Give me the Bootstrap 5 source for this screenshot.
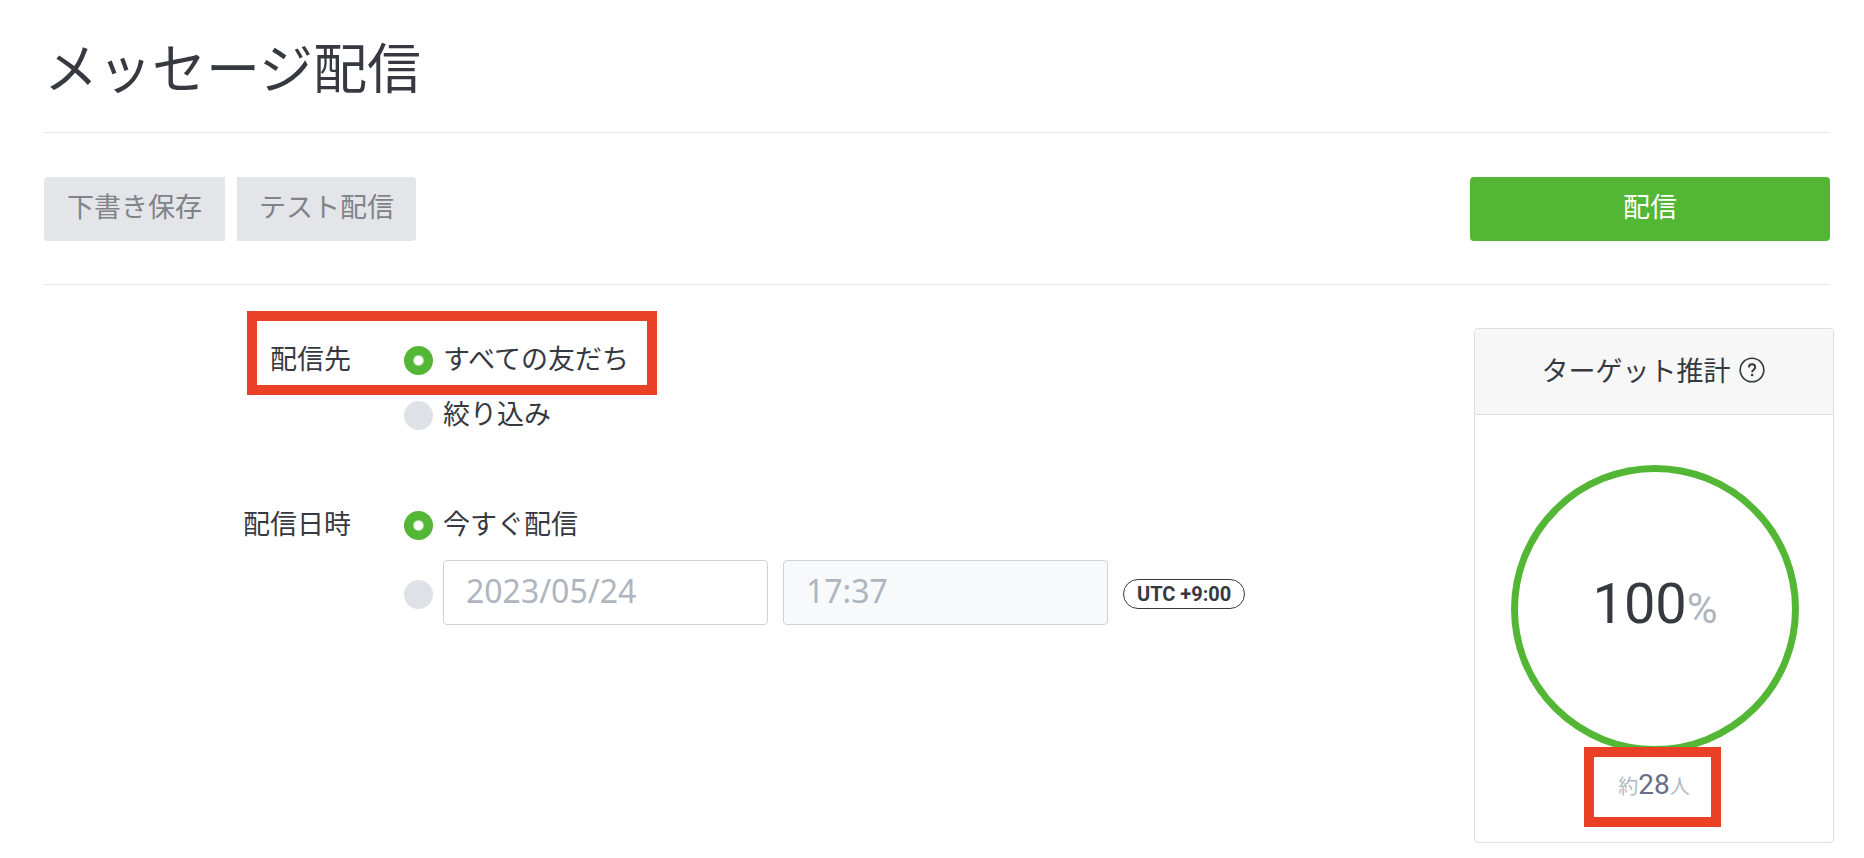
<!DOCTYPE html>
<html lang="ja">
<head>
<meta charset="utf-8">
<meta name="viewport" content="width=device-width, initial-scale=1">
<title>メッセージ配信</title>
<link href="https://cdn.jsdelivr.net/npm/bootstrap@5.3.0/dist/css/bootstrap.min.css" rel="stylesheet">
<style>
  :root { --ink: #36393f; --green: #53b635; --rule: #e4e5e6; --mute: #aeb5be; --mark: #ea4025; }
  body { font-family: "Noto Sans CJK JP", sans-serif; font-size: 27px; line-height: 40px; color: var(--ink); background: #fff; }
  .page { padding: 34px 34px 0 44px; }
  .page-title { font-size: 54px; line-height: 64px; font-weight: 400; padding-bottom: 34px; margin: 0; border-bottom: 1px solid var(--rule); }
  .actions { padding: 44px 0 43px; border-bottom: 1px solid var(--rule); }
  .action-pair { gap: 12px; }
  .btn-tall { height: 64px; padding: 0 22px 6px; font-size: 27px; line-height: 40px; border: 0; border-radius: 4px; }
  .btn-soft, .btn-soft:hover { background: #e3e5e9; color: #808388; }
  .btn-soft.is-first { border-radius: 4px 0 0 4px; padding-left: 23px; padding-right: 23px; }
  .btn-soft.is-last { border-radius: 0 4px 4px 0; }
  .btn-send, .btn-send:hover { width: 360px; background: var(--green); color: #fff; }
  .content { margin-right: -4px; padding-top: 43px; }
  .send-form { padding-top: 5px; }
  .field-name { width: 307px; line-height: 50px; text-align: right; }
  .field-group { gap: 53px; margin-bottom: 55px; }
  .option { min-height: 55px; gap: 10px; }
  .option label { padding-bottom: 5px; }
  .form-check-input.dot { width: 29px; height: 29px; margin: 0; border: 0; background: #dee2e7; flex: none; }
  .form-check-input.dot:checked { background: radial-gradient(circle, #fff 4px, var(--green) 6px); }
  .option-date { margin-top: 7px; min-height: 65px; }
  .option-date .dot, .zone { margin-top: 3px !important; }
  .date-fields { gap: 15px; }
  .form-control.when { flex: 0 1 325px; min-width: 0; height: 65px; padding: 0 22px 4px; font-family: "Noto Sans", sans-serif; font-size: 32px; line-height: 40px; color: var(--mute); border: 1px solid #cdd1d8; border-radius: 4px; }
  .form-control.when:disabled { background: #f7f9fb; }
  .zone { border: 1px solid var(--ink); border-radius: 15px; height: 30px; padding: 0 13px; font: 700 20px/28px Roboto, sans-serif; }
  .estimate { width: 360px; flex: none; border: 1px solid #dcdee0; border-radius: 4px; }
  .estimate .card-header { height: 86px; padding: 0 2px 4px 0; background: #f7f7f7; border-bottom: 1px solid #d8dadc; font-size: 27px; gap: 8px; }
  .estimate .card-body { padding: 50px 0 38px 2px; }
  .ring { width: 288px; height: 288px; border: 7px solid var(--green); border-radius: 50%; padding-bottom: 6px; font-family: Roboto, sans-serif; }
  .ring strong { font-weight: 400; font-size: 56px; line-height: 64px; }
  .ring span { font-size: 42px; line-height: 64px; color: var(--mute); }
  .people { margin-top: 14px; line-height: 36px; font-size: 20px; color: #b2b9c2; padding-right: 2px; }
  .people strong { font-family: Roboto, sans-serif; font-weight: 400; font-size: 28px; color: #666d87; }
  /* red frames laid over the highlighted parts */
  .callout { position: absolute; border: 10px solid var(--mark); pointer-events: none; }
  .callout-target { left: 203px; top: -22px; width: 410px; height: 84px; }
  .callout-people { left: 50%; top: -20px; width: 137px; height: 80px; margin-left: -71px; }
</style>
</head>
<body>
<main class="page">
  <h1 class="page-title">メッセージ配信</h1>

  <div class="actions d-flex justify-content-between">
    <div class="action-pair d-flex">
      <button type="button" class="btn btn-tall btn-soft is-first">下書き保存</button>
      <button type="button" class="btn btn-tall btn-soft is-last">テスト配信</button>
    </div>
    <button type="submit" form="send" class="btn btn-tall btn-send">配信</button>
  </div>

  <div class="content d-flex align-items-start">
    <form id="send" class="send-form flex-grow-1">
      <div class="field-group d-flex position-relative" role="radiogroup" aria-labelledby="to-name">
        <div class="field-name flex-shrink-0" id="to-name">配信先</div>
        <div>
          <div class="option d-flex align-items-center">
            <input class="form-check-input dot" type="radio" name="to" id="to-all" checked>
            <label for="to-all">すべての友だち</label>
          </div>
          <div class="option d-flex align-items-center">
            <input class="form-check-input dot" type="radio" name="to" id="to-some">
            <label for="to-some">絞り込み</label>
          </div>
        </div>
        <div class="callout callout-target"></div>
      </div>

      <div class="field-group d-flex" role="radiogroup" aria-labelledby="at-name">
        <div class="field-name flex-shrink-0" id="at-name">配信日時</div>
        <div class="flex-grow-1">
          <div class="option d-flex align-items-center">
            <input class="form-check-input dot" type="radio" name="at" id="at-now" checked>
            <label for="at-now">今すぐ配信</label>
          </div>
          <div class="option option-date d-flex align-items-center">
            <input class="form-check-input dot" type="radio" name="at" id="at-date" aria-label="日時を指定">
            <div class="date-fields d-flex align-items-center flex-grow-1">
              <input class="form-control when" type="text" value="2023/05/24" aria-label="日付">
              <input class="form-control when" type="text" value="17:37" aria-label="時刻" disabled>
              <span class="zone text-nowrap">UTC +9:00</span>
            </div>
          </div>
        </div>
      </div>
    </form>

    <aside class="card estimate">
      <div class="card-header d-flex align-items-center justify-content-center">
        <span>ターゲット推計</span>
        <svg width="26" height="26" viewBox="0 0 26 26" fill="none" stroke="#36393f" stroke-width="1.6" aria-hidden="true">
          <circle cx="13" cy="13" r="11.8"/>
          <path d="M9.900 10.500c0-2 1.300-3.200 3.200-3.200s3.100 1.100 3.100 2.900c0 2.500-3.100 2.500-3.100 5" stroke-width="1.900"/>
          <circle cx="13.100" cy="18" r="1.300" fill="#36393f" stroke="none"/>
        </svg>
      </div>
      <div class="card-body">
        <div class="ring mx-auto d-flex align-items-center justify-content-center">
          <div><strong>100</strong><span>%</span></div>
        </div>
        <div class="people text-center position-relative">約<strong>28</strong>人
          <div class="callout callout-people"></div>
        </div>
      </div>
    </aside>
  </div>
</main>
<script src="https://cdn.jsdelivr.net/npm/bootstrap@5.3.0/dist/js/bootstrap.bundle.min.js"></script>
</body>
</html>
